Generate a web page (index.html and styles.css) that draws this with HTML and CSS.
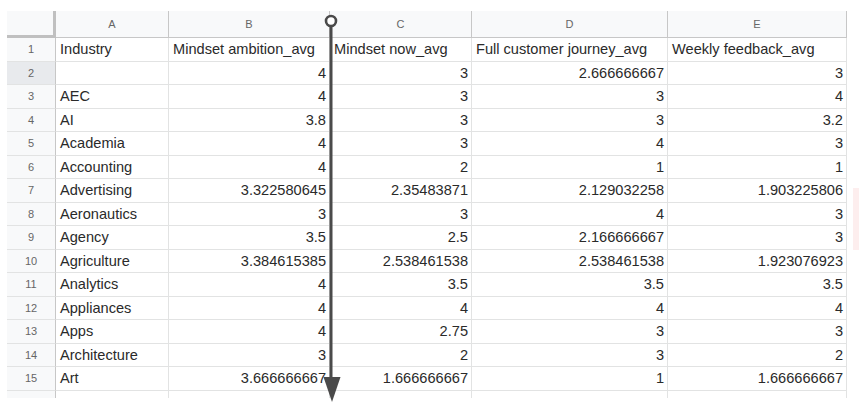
FILE: index.html
```html
<!DOCTYPE html>
<html lang="en">

<head>
    <meta charset="UTF-8">
    <title>Industry averages</title>
    <link rel="stylesheet" href="styles.css">
</head>

<body>
    <div class="sheet">
        <div class="grid">
            <!-- column headers -->
            <div class="corner"></div>
            <div class="col-head">A</div>
            <div class="col-head">B</div>
            <div class="col-head">C</div>
            <div class="col-head">D</div>
            <div class="col-head">E</div>

            <div class="row-head">1</div>
            <div class="cell">Industry</div>
            <div class="cell">Mindset ambition_avg</div>
            <div class="cell">Mindset now_avg</div>
            <div class="cell">Full customer journey_avg</div>
            <div class="cell">Weekly feedback_avg</div>

            <div class="row-head active">2</div>
            <div class="cell"></div>
            <div class="cell num">4</div>
            <div class="cell num">3</div>
            <div class="cell num">2.666666667</div>
            <div class="cell num">3</div>

            <div class="row-head">3</div>
            <div class="cell">AEC</div>
            <div class="cell num">4</div>
            <div class="cell num">3</div>
            <div class="cell num">3</div>
            <div class="cell num">4</div>

            <div class="row-head">4</div>
            <div class="cell">AI</div>
            <div class="cell num">3.8</div>
            <div class="cell num">3</div>
            <div class="cell num">3</div>
            <div class="cell num">3.2</div>

            <div class="row-head">5</div>
            <div class="cell">Academia</div>
            <div class="cell num">4</div>
            <div class="cell num">3</div>
            <div class="cell num">4</div>
            <div class="cell num">3</div>

            <div class="row-head">6</div>
            <div class="cell">Accounting</div>
            <div class="cell num">4</div>
            <div class="cell num">2</div>
            <div class="cell num">1</div>
            <div class="cell num">1</div>

            <div class="row-head">7</div>
            <div class="cell">Advertising</div>
            <div class="cell num">3.322580645</div>
            <div class="cell num">2.35483871</div>
            <div class="cell num">2.129032258</div>
            <div class="cell num">1.903225806</div>

            <div class="row-head">8</div>
            <div class="cell">Aeronautics</div>
            <div class="cell num">3</div>
            <div class="cell num">3</div>
            <div class="cell num">4</div>
            <div class="cell num">3</div>

            <div class="row-head">9</div>
            <div class="cell">Agency</div>
            <div class="cell num">3.5</div>
            <div class="cell num">2.5</div>
            <div class="cell num">2.166666667</div>
            <div class="cell num">3</div>

            <div class="row-head">10</div>
            <div class="cell">Agriculture</div>
            <div class="cell num">3.384615385</div>
            <div class="cell num">2.538461538</div>
            <div class="cell num">2.538461538</div>
            <div class="cell num">1.923076923</div>

            <div class="row-head">11</div>
            <div class="cell">Analytics</div>
            <div class="cell num">4</div>
            <div class="cell num">3.5</div>
            <div class="cell num">3.5</div>
            <div class="cell num">3.5</div>

            <div class="row-head">12</div>
            <div class="cell">Appliances</div>
            <div class="cell num">4</div>
            <div class="cell num">4</div>
            <div class="cell num">4</div>
            <div class="cell num">4</div>

            <div class="row-head">13</div>
            <div class="cell">Apps</div>
            <div class="cell num">4</div>
            <div class="cell num">2.75</div>
            <div class="cell num">3</div>
            <div class="cell num">3</div>

            <div class="row-head">14</div>
            <div class="cell">Architecture</div>
            <div class="cell num">3</div>
            <div class="cell num">2</div>
            <div class="cell num">3</div>
            <div class="cell num">2</div>

            <div class="row-head">15</div>
            <div class="cell">Art</div>
            <div class="cell num">3.666666667</div>
            <div class="cell num">1.666666667</div>
            <div class="cell num">1</div>
            <div class="cell num">1.666666667</div>

            <!-- next row, only its top edge shows -->
            <div class="row-head"></div>
            <div class="cell"></div>
            <div class="cell"></div>
            <div class="cell"></div>
            <div class="cell"></div>
            <div class="cell"></div>
        </div>
    </div>

    <!-- annotation drawn over the sheet -->
    <svg class="arrow" width="859" height="408" viewBox="0 0 859 408">
        <circle cx="331" cy="21" r="5" fill="#fff" stroke="#4a4a4a" stroke-width="2.6" />
        <line x1="331" y1="26" x2="331" y2="380" stroke="#4a4a4a" stroke-width="3" />
        <polygon points="323.5,377 340.5,377 332,402" fill="#4a4a4a" />
    </svg>
    <div class="edge-mark"></div>
</body>

</html>
```

FILE: styles.css
```css
body {
    margin: 0;
    padding: 0;
    background-color: #fff;
    font-family: 'Liberation Sans', Arial, sans-serif;
    color: #222;
}

/* Sheet area */
.sheet {
    margin: 11px 0 0 7px;
    height: 387px;
    overflow: hidden;
}

.grid {
    display: grid;
    grid-template-columns: 49px 113px 161px 142px 196px 179px;
    grid-template-rows: 27px;
    grid-auto-rows: 23.5px;
}

.grid > div {
    box-sizing: border-box;
    border-right: 1px solid #e2e3e3;
    border-bottom: 1px solid #e2e3e3;
    overflow: hidden;
    white-space: nowrap;
}

/* Headers */
.corner {
    background-color: #f8f9fa;
    border-right: 3px solid #c0c0c0 !important;
    border-bottom: 3px solid #c0c0c0 !important;
}

.col-head {
    background-color: #f8f9fa;
    border-right-color: #c7c7c7 !important;
    border-bottom-color: #c7c7c7 !important;
    font-size: 11px;
    color: #666;
    text-align: center;
    line-height: 26px;
}

.row-head {
    background-color: #f8f9fa;
    border-right-color: #c7c7c7 !important;
    font-size: 11px;
    color: #666;
    text-align: center;
    line-height: 23px;
}

.row-head.active {
    background-color: #e8eaed;
}

/* Cells */
.cell {
    font-size: 14.6px;
    line-height: 23px;
    padding: 0 3px 0 4px;
    color: #2a2a2a;
}

.num {
    text-align: right;
}

/* Overlay */
.arrow {
    position: absolute;
    top: 0;
    left: 0;
    pointer-events: none;
}

.edge-mark {
    position: absolute;
    left: 853px;
    top: 188px;
    width: 6px;
    height: 62px;
    background-color: #fdeeee;
}
```
